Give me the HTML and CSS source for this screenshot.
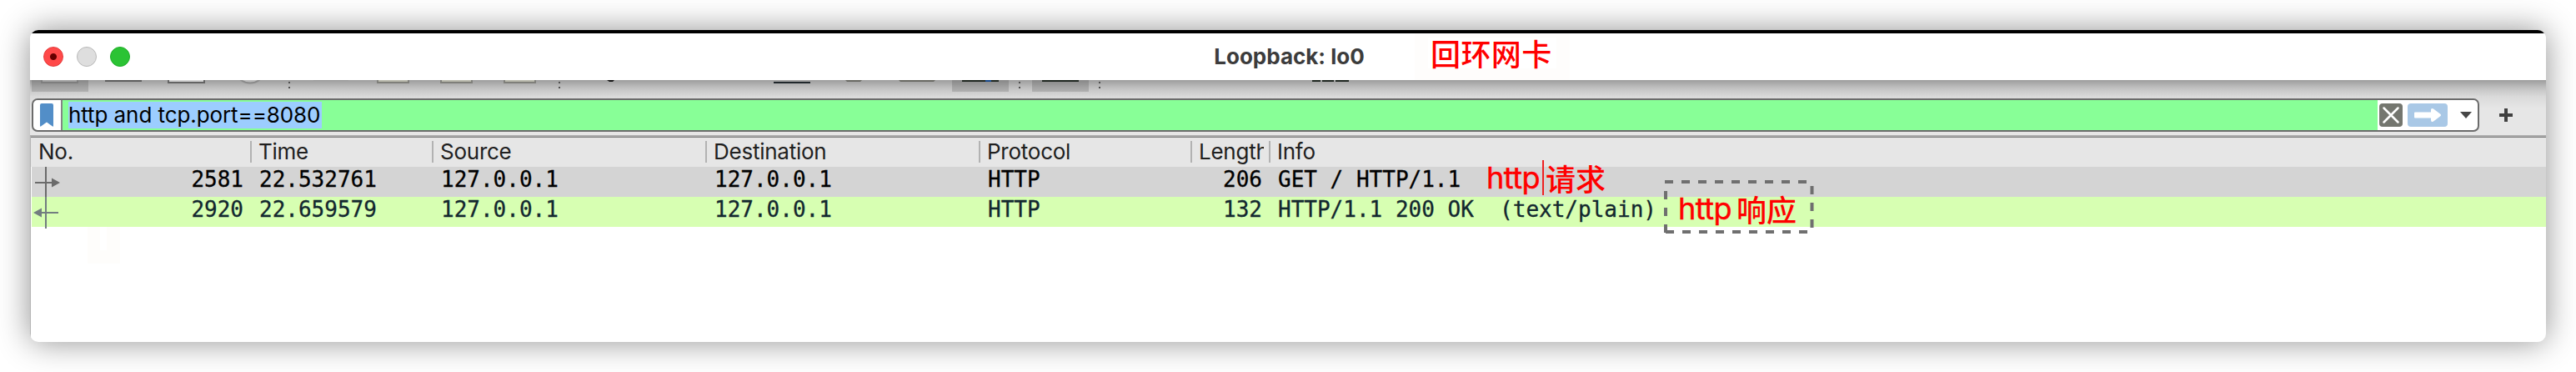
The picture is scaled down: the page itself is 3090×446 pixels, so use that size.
FILE: index.html
```html
<!DOCTYPE html>
<html lang="zh-CN">
<head>
    <meta charset="UTF-8">
    <title>Loopback: lo0</title>
    <link rel="stylesheet" href="styles.css">
</head>
<body>
    <div class="window">
        <div class="titlebar">
            <div class="lights">
                <span class="light close"></span>
                <span class="light minimize"></span>
                <span class="light zoom"></span>
            </div>
            <h1 class="title">Loopback: lo0</h1>
        </div>

        <div class="toolbar">
            <!-- bottoms of the toolbar buttons, cut off by the title bar -->
            <svg class="toolbar-icons" width="1700" height="22" viewBox="36 96 1700 22">
                <g fill="#000" fill-opacity="0.14">
                    <rect x="38" y="96" width="68" height="14"/>
                    <rect x="1142" y="96" width="68" height="14"/>
                    <rect x="1238" y="96" width="68" height="14"/>
                </g>
                <path d="M50 96v3h43v-3" fill="#a2a2a2" stroke="#7e7e7e" stroke-width="2"/>
                <rect x="126" y="96" width="44" height="2" fill="#5c5c5c"/>
                <path d="M202 96v3h43v-3" fill="#d2d2d2" stroke="#636363" stroke-width="2"/>
                <path d="M288 95a18 18 0 0 0 24 0" fill="#bbb" stroke="#8a8a8a" stroke-width="2"/>
                <rect x="376" y="96" width="42" height="1" fill="#979797"/>
                <g fill="#b9b9ac" stroke="#7f7f7a" stroke-width="2">
                    <path d="M453 96v3h37v-3"/>
                    <path d="M529 96v3h37v-3"/>
                    <path d="M605 96v3h37v-3"/>
                </g>
                <path d="M728 96h9l-2 2h-4z" fill="#111"/>
                <rect x="928" y="98" width="44" height="2" fill="#20272b"/>
                <path d="M1014 96h20l-2 2h-16zM1078 96h44l-2 2h-40z" fill="#686862"/>
                <rect x="1154" y="96" width="44" height="2" fill="#1c241e"/>
                <rect x="1182" y="96" width="7" height="2" fill="#15478c"/>
                <rect x="1250" y="96" width="44" height="2" fill="#1c241e"/>
                <path d="M1574 96h10v2h-10zM1586 96h14v2h-14zM1602 96h16v2h-16z" fill="#1c241e"/>
                <path d="M346 98h2v2h-2zM346 104h2v2h-2zM670 98h2v2h-2zM670 104h2v2h-2zM1222 98h2v2h-2zM1222 104h2v2h-2zM1318 98h2v2h-2zM1318 104h2v2h-2z" fill="#505050"/>
            </svg>
            <div class="filter-row">
                <div class="filter">
                    <div class="bookmark">
                        <svg width="16" height="28" viewBox="0 0 16 28">
                            <path d="M0 2q0-2 2-2h12q2 0 2 2v25q0 1-1 .5L8 22.500 1 27.500q-1 .5-1-.5z" fill="#528ec8"/>
                        </svg>
                    </div>
                    <div class="filter-input"><span class="selection">http and tcp.port==8080</span></div>
                    <div class="filter-actions">
                        <svg width="28" height="28" viewBox="0 0 28 28">
                            <rect width="28" height="28" rx="4" fill="#74766f"/>
                            <path d="M5.500 5.500l17 17M22.500 5.500l-17 17" stroke="#fff" stroke-width="2.500" stroke-linecap="round"/>
                        </svg>
                        <svg width="48" height="28" viewBox="0 0 48 28">
                            <rect width="48" height="28" rx="4" fill="#a9c8e6"/>
                            <path d="M9 10.500h19V8q0-3 3-1.500l8 6q2 1.500 0 3l-8 6q-3 1.500-3-1.500v-2.500H9q-1 0-1-1v-5q0-1 1-1z" fill="#fff"/>
                        </svg>
                        <svg class="chevron" width="14" height="8" viewBox="0 0 14 8">
                            <path d="M0 0h14L7 8z" fill="#464646"/>
                        </svg>
                    </div>
                </div>
                <svg class="add" width="16" height="16" viewBox="0 0 16 16">
                    <path d="M8 0v16M0 8h16" stroke="#404040" stroke-width="4"/>
                </svg>
            </div>
        </div>

        <div class="packets">
            <div class="row header">
                <span>No.</span>
                <span>Time</span>
                <span>Source</span>
                <span>Destination</span>
                <span>Protocol</span>
                <span><b class="clipped">Length</b></span>
                <span>Info</span>
            </div>
            <div class="row selected">
                <span class="num">2581</span>
                <span>22.532761</span>
                <span>127.0.0.1</span>
                <span>127.0.0.1</span>
                <span>HTTP</span>
                <span class="num">206</span>
                <span>GET / HTTP/1.1</span>
            </div>
            <div class="row http">
                <span class="num">2920</span>
                <span>22.659579</span>
                <span>127.0.0.1</span>
                <span>127.0.0.1</span>
                <span>HTTP</span>
                <span class="num">132</span>
                <span>HTTP/1.1 200 OK  (text/plain)</span>
            </div>
            <svg class="relation" width="36" height="74" viewBox="38 200 36 74">
                <path d="M55 200v36M42 219h22" stroke="#6b6b6b" stroke-width="2"/>
                <path d="M62 213.500v11l10-5.500z" fill="#6b6b6b"/>
                <path d="M55 236v38M48 255h22" stroke="#727d80" stroke-width="2"/>
                <path d="M50 249.500v11l-10-5.500z" fill="#727d80"/>
            </svg>
            <div class="ghost"></div>
        </div>
    </div>

    <!-- red notes drawn over the window -->
    <div class="note note-title">回环网卡</div>
    <div class="note note-request"><span class="latin">http</span><i class="caret"></i>请求</div>
    <div class="note note-response">
        <svg class="dashes" width="180" height="64" viewBox="1996 216 180 64">
            <g stroke="#6f6f6f" stroke-width="4" stroke-dasharray="10 10" fill="none">
                <path d="M1997 218h172"/>
                <path d="M2173.500 223v52"/>
                <path d="M1998 278h172"/>
                <path d="M1998 229v50"/>
            </g>
        </svg>
        <span class="latin">http</span><span class="cjk">响应</span>
    </div>
</body>
</html>
```
FILE: styles.css
```css
* {
    margin: 0;
    padding: 0;
    box-sizing: border-box;
}

body {
    width: 3090px;
    height: 446px;
    padding: 36px;
    overflow: hidden;
    background-color: #fff;
    font-family: Inter, "Noto Sans CJK SC", sans-serif;
    font-size: 26px;
}

svg {
    display: block;
    flex-shrink: 0;
}

.window {
    display: flex;
    flex-direction: column;
    width: 3018px;
    height: 374px;
    border-radius: 10px;
    background-color: #fff;
    box-shadow: 0 0 38px rgba(0, 0, 0, 0.44);
    overflow: hidden;
}

.titlebar {
    position: relative;
    display: flex;
    align-items: center;
    justify-content: center;
    height: 60px;
    border-top: 4px solid #000;
    background-color: #fff;
    flex-shrink: 0;
}

.lights {
    position: absolute;
    left: 16px;
    top: 16px;
    display: flex;
    gap: 16px;
}

.light {
    width: 24px;
    height: 24px;
    border-radius: 50%;
    border: 1px solid;
}

.light.close {
    background: radial-gradient(circle, #600 3.500px, #ff4949 4.500px);
    border-color: #e33a3a;
}

.light.minimize {
    background-color: #dedede;
    border-color: #b9b9b9;
}

.light.zoom {
    background-color: #2bc334;
    border-color: #1fae29;
}

.title {
    padding-left: 3px;
    color: #3c3c3c;
    font-size: 26px;
    font-weight: 700;
    line-height: 32px;
}

.toolbar {
    height: 66px;
    background: linear-gradient(#9c9c9c, #b4b4b4 6px, #c8c8c8 12px, #dadada 20px, #e6e6e6 34px);
    flex-shrink: 0;
}

.filter-row {
    display: flex;
    align-items: center;
    gap: 24px;
    padding-left: 2px;
}

.filter {
    display: flex;
    width: 2936px;
    height: 40px;
    border: 2px solid #6b6b6b;
    border-radius: 7px;
    background-color: #fff;
    overflow: hidden;
}

.bookmark {
    width: 35px;
    padding: 4px 0 0 8px;
    border-right: 2px solid #858585;
}

.filter-input {
    flex: 1;
    padding: 2px 0 0 7px;
    background-color: #88ff97;
}

.selection {
    display: inline-block;
    width: 304px;
    height: 32px;
    background-color: #9ccdff;
    color: #000;
    line-height: 32px;
    letter-spacing: -0.08px;
    white-space: nowrap;
}

.filter-actions {
    display: flex;
    align-items: center;
    gap: 6px;
    width: 120px;
    padding-left: 2px;
}

.chevron {
    margin-left: 9px;
}

.packets {
    position: relative;
    flex: 1;
    border-top: 2px solid #adadad;
    border-left: 1px solid #b4b4b4;
    padding-left: 1px;
}

.row {
    display: grid;
    grid-template-columns: 264px 218px 328px 328px 254px 94px 1fr;
    height: 36px;
    color: #000;
    font-family: "DejaVu Sans Mono", monospace;
    white-space: pre;
}

.row span {
    padding-left: 9px;
}

.row .num {
    padding-right: 10px;
    text-align: right;
}

.row.selected,
.row.http {
    line-height: 31px;
    -webkit-text-stroke: 0.3px;
}

.row.header {
    margin-left: -1px;
    padding-left: 1px;
    border-top: 1px solid #7c7c7c;
    background-color: #e6e6e6;
    color: #202020;
    font-family: Inter, sans-serif;
    letter-spacing: -0.25px;
}

.row.header span {
    height: 26px;
    margin-top: 4px;
    padding-left: 8px;
    border-right: 2px solid #b2b2b2;
    line-height: 26px;
}

.row.header span:last-child {
    border-right: none;
}

.clipped {
    display: block;
    width: 78px;
    height: 30px;
    font-weight: 400;
    overflow: hidden;
}

.row.selected {
    background-color: #d4d4d4;
}

.row.http {
    background-color: #d7ffb2;
    color: #12272e;
}

.relation {
    position: absolute;
    left: 1px;
    top: 36px;
}

.ghost {
    position: absolute;
    left: 68px;
    top: 108px;
    width: 39px;
    height: 44px;
    background: linear-gradient(#fff, #fff) 15px 0 / 8px 28px no-repeat #fefdfb;
}

.note {
    position: absolute;
    display: flex;
    align-items: center;
    color: #f00;
    font-family: "Noto Sans CJK SC", sans-serif;
    font-size: 36px;
    font-weight: 500;
    line-height: 36px;
    white-space: nowrap;
}

.note .latin {
    font-family: Inter, sans-serif;
    font-weight: 400;
    letter-spacing: -0.5px;
    -webkit-text-stroke: 0.5px;
}

.note-title {
    left: 1697px;
    top: 40px;
    width: 186px;
    height: 56px;
    padding: 0 0 11px 19px;
    letter-spacing: 0.4px;
    background: linear-gradient(#fff, #fff) 16px 5px / 154px 37px no-repeat #fefdfc;
}

.note-request {
    left: 1764px;
    top: 178px;
    width: 182px;
    height: 58px;
    padding: 12px 0 0 19px;
}

.caret {
    width: 2px;
    height: 42px;
    margin: 0 2px 0 3px;
    background-color: #e22;
}

.note-response {
    left: 1996px;
    top: 216px;
    width: 180px;
    height: 64px;
    padding: 4px 0 0 17px;
}

.note-response .cjk {
    margin-left: 6px;
}

.dashes {
    position: absolute;
    left: 0;
    top: 0;
}
```
